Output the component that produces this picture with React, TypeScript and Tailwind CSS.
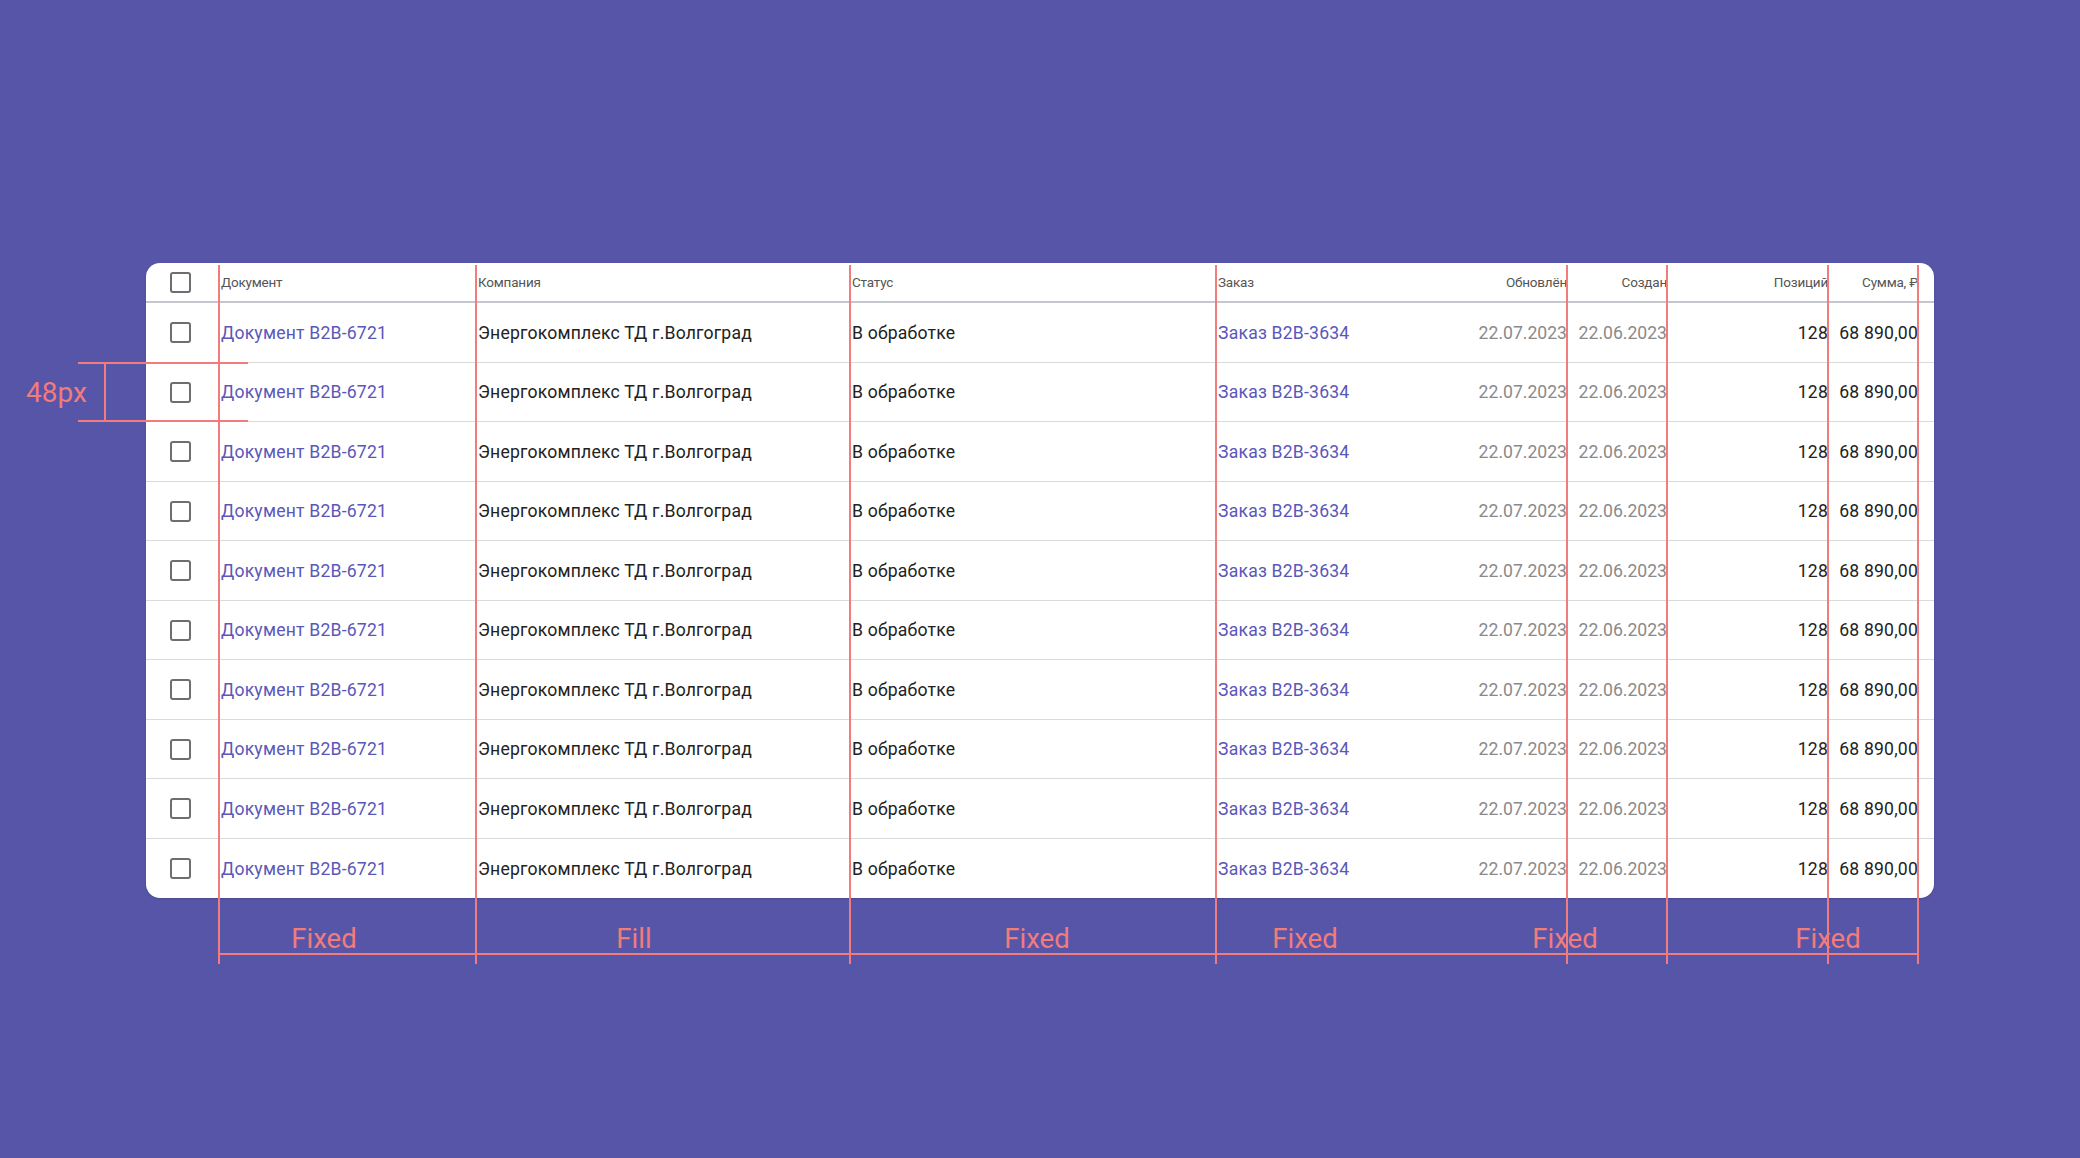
import React from 'react';

const rows = Array.from({ length: 10 }, (_, i) => ({
  id: i,
  doc: 'Документ B2B-6721',
  company: 'Энергокомплекс ТД г.Волгоград',
  status: 'В обработке',
  order: 'Заказ B2B-3634',
  updated: '22.07.2023',
  created: '22.06.2023',
  positions: '128',
  sum: '68 890,00',
}));

// red guide lines (x positions on the page)
const guides = [219, 476, 850, 1216, 1567, 1667, 1828, 1918];

const labels = [
  { text: 'Fixed', x: 324 },
  { text: 'Fill', x: 634 },
  { text: 'Fixed', x: 1037 },
  { text: 'Fixed', x: 1305 },
  { text: 'Fixed', x: 1565 },
  { text: 'Fixed', x: 1828 },
];

function Checkbox() {
  return <div className="w-[21px] h-[21px] rounded-[3px] border-2 border-[#6e6e72] bg-white" />;
}

export default function App() {
  return (
    <div
      className="relative w-[2080px] h-[1158px] bg-[#5755a8] overflow-hidden pt-[263px] pl-[146px]"
      style={{ fontFamily: 'Roboto, "Noto Sans", sans-serif' }}
    >
      {/* Table card */}
      <div className="w-[1788px] bg-white rounded-[14px] overflow-hidden shadow-[0_1px_2px_rgba(0,0,0,0.15)]">
        {/* Header */}
        <div className="flex items-center h-[40px] pt-[1px] border-b-2 border-[#c6c6ce] text-[13.5px] text-[#555] tracking-[-0.2px]">
          <div className="w-[73px] pl-[24px] flex items-center">
            <Checkbox />
          </div>
          <div className="w-[257px] pl-[2px]">Документ</div>
          <div className="w-[374px] pl-[2px]">Компания</div>
          <div className="w-[366px] pl-[2px]">Статус</div>
          <div className="w-[220px] pl-[2px]">Заказ</div>
          <div className="w-[131px] text-right">Обновлён</div>
          <div className="w-[100px] text-right">Создан</div>
          <div className="w-[161px] text-right">Позиций</div>
          <div className="w-[90px] text-right">Сумма, ₽</div>
        </div>

        {/* Rows */}
        {rows.map((row, i) => (
          <div
            key={row.id}
            className={`flex items-center h-[59.5px] pt-[1px] text-[17.6px] tracking-[0.2px] ${
              i < rows.length - 1 ? 'border-b border-[#dadada]' : ''
            }`}
          >
            <div className="w-[73px] pl-[24px] flex items-center">
              <Checkbox />
            </div>
            <div className="w-[257px] pl-[2px] text-[#5b57b9]">{row.doc}</div>
            <div className="w-[374px] pl-[2px] text-[#222]">{row.company}</div>
            <div className="w-[366px] pl-[2px] text-[#222]">{row.status}</div>
            <div className="w-[220px] pl-[2px] text-[#5b57b9]">{row.order}</div>
            <div className="w-[131px] text-right text-[#8a8a8a] tracking-[0px] whitespace-nowrap">{row.updated}</div>
            <div className="w-[100px] text-right text-[#8a8a8a] tracking-[0px] whitespace-nowrap">{row.created}</div>
            <div className="w-[161px] text-right text-[#222]">{row.positions}</div>
            <div className="w-[90px] text-right text-[#222] whitespace-nowrap">{row.sum}</div>
          </div>
        ))}
      </div>

      {/* Guides overlay */}
      {guides.map((x) => (
        <div
          key={x}
          className="absolute top-[265px] h-[699px] w-[2px] bg-[#f27b7b]"
          style={{ left: x - 1 }}
        />
      ))}
      <div className="absolute top-[953px] left-[219px] w-[1700px] h-[2px] bg-[#f27b7b]" />

      {labels.map((l) => (
        <div
          key={l.x}
          className="absolute top-[920px] w-[120px] -ml-[60px] text-center text-[27.5px] leading-[38px] text-[#f27b7b]"
          style={{ left: l.x }}
        >
          {l.text}
        </div>
      ))}

      {/* 48px measure */}
      <div className="absolute top-[362px] left-[78px] w-[170px] h-[2px] bg-[#f27b7b]" />
      <div className="absolute top-[420px] left-[78px] w-[170px] h-[2px] bg-[#f27b7b]" />
      <div className="absolute top-[362px] left-[104px] w-[2px] h-[60px] bg-[#f27b7b]" />
      <div className="absolute top-[374px] left-[26px] text-[28px] leading-[38px] text-[#f27b7b]">48px</div>
    </div>
  );
}
